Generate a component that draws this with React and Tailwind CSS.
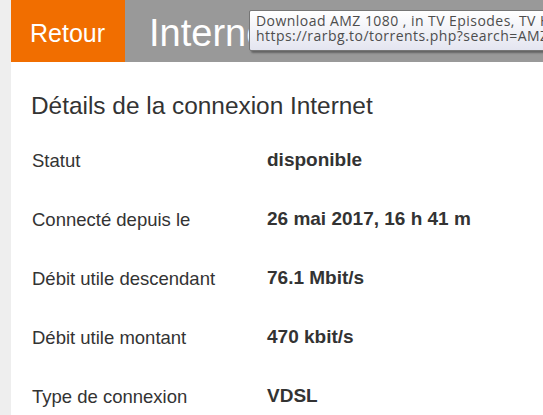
const rows = [
  ['Statut', 'disponible'],
  ['Connecté depuis le', '26 mai 2017, 16 h 41 m'],
  ['Débit utile descendant', '76.1 Mbit/s'],
  ['Débit utile montant', '470 kbit/s'],
  ['Type de connexion', 'VDSL'],
];

export default function App() {
  return (
    <div className="relative flex h-[415px] w-[543px] overflow-hidden bg-[#eeeeee] font-['Liberation_Sans',Arial,sans-serif]">
      <div className="ml-[11px] flex-1 bg-white">
        {/* Header */}
        <div className="flex h-[62px] bg-[#999999]">
          <div className="w-[114px] bg-[#f16e00] pl-[19px] pt-[15px] text-[25px] leading-normal text-white">
            Retour
          </div>
          <div className="ml-[24px] pt-[5px] text-[38px] leading-normal whitespace-nowrap text-white">
            Internet
          </div>
        </div>

        {/* Details */}
        <div className="pl-[20px]">
          <h1 className="mt-[30px] text-[24.4px] leading-[28px] text-[#333333]">
            Détails de la connexion Internet
          </h1>
          <div className="mt-[11px]">
            {rows.map(([label, value]) => (
              <div key={label} className="flex h-[59px] items-center text-[18.5px] text-[#333333]">
                <span className="w-[236px] pl-[1px]">{label}</span>
                <span className="text-[19px] font-bold">{value}</span>
              </div>
            ))}
          </div>
        </div>
      </div>

      {/* Browser tooltip */}
      <div className="absolute left-[249px] top-[10px] h-[41px] w-[320px] rounded-[2px] border border-[#767676] bg-gradient-to-b from-white to-[#e4e5f0] pl-[6px] pt-[2px] font-['Open_Sans',sans-serif] text-[14px] leading-[15px] tracking-[0.45px] whitespace-nowrap text-[#4d4d4d] shadow-[2px_2px_2px_rgba(0,0,0,0.35)]">
        <div>Download AMZ 1080 , in TV Episodes, TV HD Episodes</div>
        <div>https://rarbg.to/torrents.php?search=AMZ+1080</div>
      </div>
    </div>
  );
}
